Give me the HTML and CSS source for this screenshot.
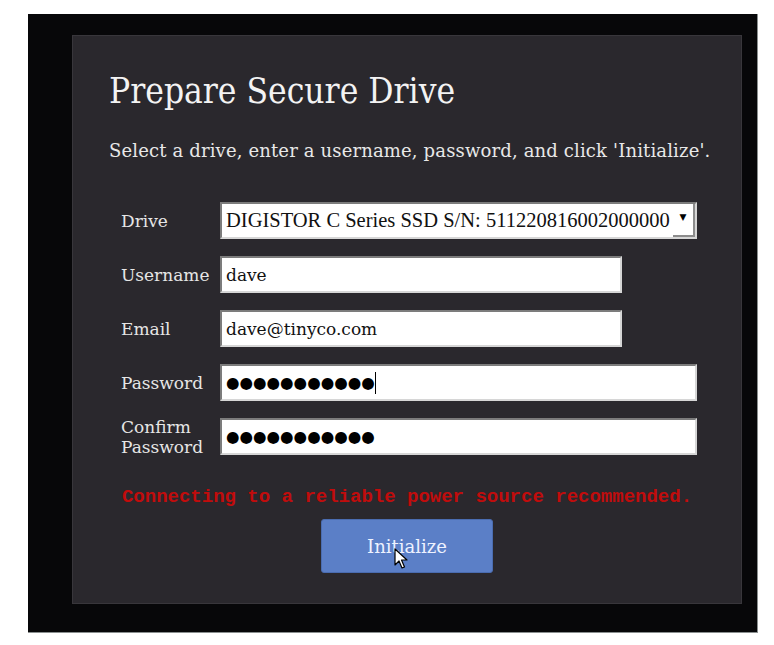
FILE: index.html
```html
<!DOCTYPE html>
<html lang="en">
<head>
  <meta charset="UTF-8">
  <meta name="viewport" content="width=device-width, initial-scale=1.0">
  <title>Prepare Secure Drive</title>
  <link rel="stylesheet" href="styles.css">
</head>
<body>
  <div class="screen">
    <div class="panel">
      <h1>Prepare Secure Drive</h1>
      <p class="lead">Select a drive, enter a username, password, and click 'Initialize'.</p>

      <form class="form">
        <div class="row">
          <label>Drive</label>
          <div class="select wide">
            <span class="select-text">DIGISTOR C Series SSD S/N: 511220816002000000</span>
            <span class="select-arrow">&#9660;</span>
          </div>
        </div>
        <div class="row">
          <label>Username</label>
          <div class="field">dave</div>
        </div>
        <div class="row">
          <label>Email</label>
          <div class="field">dave@tinyco.com</div>
        </div>
        <div class="row">
          <label>Password</label>
          <div class="field wide dots">&#9679;&#9679;&#9679;&#9679;&#9679;&#9679;&#9679;&#9679;&#9679;&#9679;&#9679;<span class="caret"></span></div>
        </div>
        <div class="row">
          <label>Confirm<br>Password</label>
          <div class="field wide dots">&#9679;&#9679;&#9679;&#9679;&#9679;&#9679;&#9679;&#9679;&#9679;&#9679;&#9679;</div>
        </div>

        <p class="warning">Connecting to a reliable power source recommended.</p>

        <div class="center">
          <button type="button" class="btn">
            Initialize
            <!-- mouse pointer sitting on the button -->
            <svg class="pointer" width="14" height="22" viewBox="0 0 14 22">
              <path d="M1 1 L1 17 L5 13 L8 20 L10.5 19 L7.5 12 L13 12 Z" fill="#fff" stroke="#000" stroke-width="1.2" stroke-linejoin="round"/>
            </svg>
          </button>
        </div>
      </form>
    </div>
  </div>
</body>
</html>
```

FILE: styles.css
```css
body {
  margin: 0;
  background: #fff;
  font-family: "DejaVu Serif", "Liberation Serif", serif;
}
.screen {
  margin: 14px 0 0 28px;
  width: 730px;
  height: 619px;
  box-sizing: border-box;
  padding: 21px 15px 28px 44px;
  background: #070709;
  border-right: 1px solid #8a8f8f;
  border-bottom: 1px solid #8a8f8f;
}
.panel {
  height: 100%;
  box-sizing: border-box;
  padding: 35px 36px 0 36px;
  background: #2a282d;
  border: 1px solid #38363b;
  color: #e8e8e8;
}
h1 {
  margin: 0;
  font-size: 35px;
  line-height: 40px;
  font-weight: normal;
  font-stretch: condensed;
  color: #f3f3f3;
}
.lead {
  margin: 29px 0 0;
  font-size: 18px;
  line-height: 22px;
  letter-spacing: 0.15px;
  white-space: nowrap;
}
.form {
  margin: 40px 0 0 12px;
  display: flex;
  flex-direction: column;
  gap: 17px;
}
.row {
  display: grid;
  grid-template-columns: 99px auto;
  grid-template-rows: 37px;
  align-items: center;
}
.row label {
  font-size: 17px;
  line-height: 20px;
  color: #e6e6e6;
}
.field,
.select {
  box-sizing: border-box;
  width: 402px;
  height: 37px;
  background: #fff;
  color: #111;
  border: 2px solid;
  border-color: #7c7c7c #d6d6d6 #d6d6d6 #7c7c7c;
  padding: 0 4px;
  font-size: 17px;
  display: flex;
  align-items: center;
}
.wide {
  width: 477px;
}
.select {
  padding-right: 0;
}
.select-text {
  flex: 1;
  font-family: "Liberation Serif", serif;
  font-size: 20.5px;
  white-space: nowrap;
  overflow: hidden;
}
.select-arrow {
  width: 22px;
  height: 100%;
  box-sizing: border-box;
  border-right: 2px solid #8c8c8c;
  border-bottom: 2px solid #8c8c8c;
  display: flex;
  align-items: flex-start;
  justify-content: center;
  padding-top: 8px;
  font-family: "DejaVu Sans", sans-serif;
  font-size: 9px;
  color: #000;
}
.dots {
  font-family: "DejaVu Sans", sans-serif;
  font-size: 15.5px;
  color: #000;
}
.caret {
  display: inline-block;
  width: 1px;
  height: 22px;
  background: #000;
}
.warning {
  margin: 13px 0 0 -12px;
  text-align: center;
  font-family: "Liberation Mono", monospace;
  font-weight: bold;
  font-size: 19px;
  line-height: 24px;
  color: #c10c0c;
}
.center {
  margin: -7px 0 0 -12px;
  text-align: center;
}
.btn {
  position: relative;
  width: 172px;
  height: 54px;
  background: #5b7fc7;
  border: 1px solid #4a6cb0;
  border-radius: 3px;
  color: #eef2ff;
  font-family: "DejaVu Serif", serif;
  font-size: 18px;
}
.pointer {
  position: absolute;
  left: 72px;
  top: 28px;
}
```
